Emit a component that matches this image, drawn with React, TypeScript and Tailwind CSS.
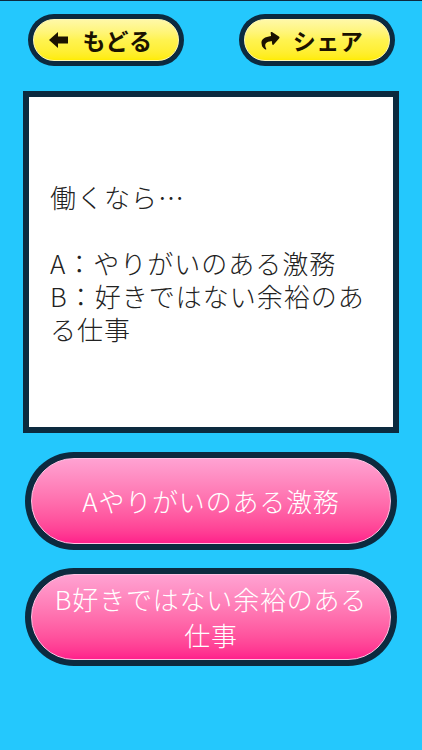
import { FaShare } from "react-icons/fa"

const jp = { fontFamily: '"Noto Sans CJK JP", "Noto Sans", sans-serif' }

function TopButton({ icon, label }: { icon: React.ReactNode; label: string }) {
  return (
    <button className="w-[156px] h-[52px] rounded-full bg-[#0c2a3f] p-[5px]">
      <div className="h-full w-full rounded-full border border-[#fff8b8] bg-gradient-to-b from-[#fff8a6] via-[#fff350] to-[#ffec00] flex items-center justify-center gap-[13px] pr-[10px]">
        {icon}
        <span className="text-[23px] font-bold text-[#1b1200] leading-none tracking-[0.5px]" style={jp}>{label}</span>
      </div>
    </button>
  )
}

function AnswerButton({ label }: { label: string }) {
  return (
    <button className="w-[372px] h-[98px] rounded-full bg-[#0c2a3f] p-[6px]">
      <div className="h-full w-full rounded-full border border-[#ffc3e3] bg-gradient-to-b from-[#ffa2d2] to-[#ff1f8b] flex items-center justify-center px-[18px]">
        <span className="text-[26px] font-light text-white leading-[36px] text-center tracking-[0.8px]" style={jp}>{label}</span>
      </div>
    </button>
  )
}

export default function App() {
  return (
    <div className="w-[422px] h-[750px] bg-[#24c8fd] border-t border-[#0c2a3f] flex flex-col items-center overflow-hidden" style={jp}>
      {/* top bar */}
      <div className="w-full flex justify-between pl-[28px] pr-[27px] pt-[13px]">
        <TopButton
          label="もどる"
          icon={
            <svg width="20" height="16" viewBox="0 0 20 16">
              <polygon points="0,8 9,0 9,4.5 19,4.5 19,11.5 9,11.5 9,16" fill="#1b1200" />
            </svg>
          }
        />
        <TopButton label="シェア" icon={<FaShare className="text-[#1b1200] w-[19px] h-[19px] -rotate-[8deg]" />} />
      </div>

      {/* question card */}
      <div className="mt-[25px] w-[376px] h-[342px] border-[6px] border-[#0c2a3f] bg-white flex items-center pl-[21px] pr-[18px]">
        <p className="text-[26px] font-light text-[#222] leading-[33px] tracking-[1px]">
          働くなら…
          <br />
          <br />
          A：やりがいのある激務
          <br />
          B：好きではない余裕のある仕事
        </p>
      </div>

      {/* answers */}
      <div className="mt-[19px] flex flex-col gap-[18px]">
        <AnswerButton label="Aやりがいのある激務" />
        <AnswerButton label="B好きではない余裕のある仕事" />
      </div>
    </div>
  )
}
